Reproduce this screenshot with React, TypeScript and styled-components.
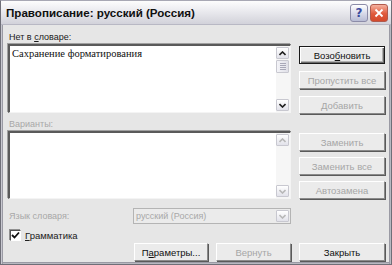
import { FC, ReactNode } from 'react';
import styled, { createGlobalStyle, css } from 'styled-components';

const GlobalStyle = createGlobalStyle`
  html, body {
    margin: 0;
    padding: 0;
    background: #ffffff;
  }
  body {
    font-family: 'Liberation Sans', 'DejaVu Sans', sans-serif;
  }
`;

const Window = styled.div`
  width: 392px;
  height: 265px;
  box-sizing: border-box;
  display: flex;
  flex-direction: column;
  background: #e6e6e6;
  border: 1px solid #6f6f78;
  border-top-color: #a8a8b4;
  box-shadow: inset 1px 0 0 #c8c8d0, inset 2px 0 0 #9a9aa4, inset -1px 0 0 #b8b8c0,
    inset -2px 0 0 #9a9aa4, inset 0 -1px 0 #b8b8c0, inset 0 -2px 0 #9a9aa4;
  overflow: hidden;
`;

const TitleBar = styled.div`
  height: 23px;
  flex: none;
  display: flex;
  align-items: center;
  padding: 0 3px 0 5px;
  background: linear-gradient(#fdfdfd 0%, #ececf0 40%, #d2d2da 100%);
  border-bottom: 1px solid #b8b8c4;
`;

const Title = styled.div`
  flex: 1;
  font-family: 'Liberation Sans', 'DejaVu Sans', sans-serif;
  font-weight: bold;
  font-size: 11.6px;
  color: #101010;
`;

const CaptionButton = styled.div<{ $close?: boolean }>`
  width: 18px;
  height: 18px;
  margin-left: 2px;
  border-radius: 3px;
  display: flex;
  align-items: center;
  justify-content: center;
  box-sizing: border-box;
  border: 1px solid ${(p) => (p.$close ? '#b05a4c' : '#8c8ca8')};
  background: ${(p) =>
    p.$close
      ? 'linear-gradient(#f5b19f, #e05a3c 55%, #d44a2c)'
      : 'linear-gradient(#ffffff, #d6d8e8 55%, #b8bcd4)'};
`;

const HelpMark = styled.span`
  color: #3a4a9c;
  font-weight: bold;
  font-size: 12px;
  font-family: 'DejaVu Sans', sans-serif;
`;

const Body = styled.div`
  flex: 1;
  display: flex;
  flex-direction: column;
  padding: 6px 8px 0 7px;
  font-size: 9px;
  color: #202020;
`;

const Label = styled.div<{ $disabled?: boolean; $mt?: number }>`
  height: 13px;
  line-height: 13px;
  margin-top: ${(p) => p.$mt ?? 0}px;
  padding-left: 1px;
  color: ${(p) => (p.$disabled ? '#a8a8a8' : '#1a1a1a')};
`;

const Section = styled.div`
  display: flex;
  gap: 8px;
`;

const ListBox = styled.div<{ $h: number }>`
  width: 283px;
  height: ${(p) => p.$h}px;
  box-sizing: border-box;
  flex: none;
  display: flex;
  background: #ffffff;
  border-style: solid;
  border-width: 2px 1px 1px 2px;
  border-color: #5a5a5a #f4f4f4 #f4f4f4 #5a5a5a;
  box-shadow: -1px -1px 0 #a0a0a0;
`;

const ListText = styled.div`
  flex: 1;
  padding: 2px 2px;
  font-family: 'Liberation Serif', 'DejaVu Serif', serif;
  font-size: 10.5px;
  color: #101010;
`;

const ScrollBar = styled.div`
  width: 13px;
  flex: none;
  display: flex;
  flex-direction: column;
  background: #f6f6f6;
  padding: 1px 1px 1px 0;
`;

const ScrollBtn = styled.div<{ $disabled?: boolean }>`
  height: 12px;
  box-sizing: border-box;
  display: flex;
  align-items: center;
  justify-content: center;
  border: 1px solid #c8c8d0;
  border-radius: 1px;
  background: linear-gradient(#ffffff, #e2e2ea);
  color: ${(p) => (p.$disabled ? '#b8b8b8' : '#202020')};
`;

const Thumb = styled.div`
  height: 13px;
  margin-top: 1px;
  box-sizing: border-box;
  border: 1px solid #c8c8d0;
  border-radius: 1px;
  background: linear-gradient(90deg, #f4f4f8, #e0e0e8);
  display: flex;
  flex-direction: column;
  align-items: center;
  justify-content: center;
  gap: 1px;
`;

const Grip = styled.div`
  width: 6px;
  height: 1px;
  background: #a8a8b8;
`;

const Spacer = styled.div`
  flex: 1;
`;

const ButtonColumn = styled.div`
  width: 86px;
  display: flex;
  flex-direction: column;
`;

const Button = styled.div<{ $disabled?: boolean; $default?: boolean; $w?: number; $mt?: number }>`
  width: ${(p) => p.$w ?? 86}px;
  height: 18px;
  margin-top: ${(p) => p.$mt ?? 0}px;
  flex: none;
  box-sizing: border-box;
  display: flex;
  align-items: center;
  justify-content: center;
  background: #ebebeb;
  border: 1px solid;
  border-color: #ffffff #8a8a8a #8a8a8a #ffffff;
  box-shadow: 1px 1px 0 #5a5a5a;
  font-size: 9.5px;
  color: ${(p) => (p.$disabled ? '#a6a6a6' : '#101010')};
  ${(p) =>
    p.$default &&
    css`
      border-color: #1a1a1a;
      box-shadow: inset 1px 1px 0 #ffffff, inset -1px -1px 0 #6a6a6a, inset -2px -2px 0 #b0b0b0;
    `}
`;

const LangRow = styled.div`
  display: flex;
  align-items: center;
  margin-top: 9px;
  height: 16px;
`;

const LangLabel = styled(Label)`
  width: 124px;
`;

const Combo = styled.div`
  width: 158px;
  height: 16px;
  box-sizing: border-box;
  display: flex;
  align-items: center;
  border: 1px solid #b4b4b4;
  background: #ebebeb;
  padding: 1px;
`;

const ComboText = styled.div`
  flex: 1;
  padding-left: 1px;
  color: #a8a8a8;
`;

const ComboBtn = styled(ScrollBtn)`
  width: 13px;
  height: 12px;
`;

const CheckRow = styled.div`
  display: flex;
  align-items: center;
  gap: 4px;
  margin-top: 5px;
  height: 12px;
  padding-left: 2px;
  font-size: 9.5px;
`;

const CheckBox = styled.div`
  width: 11px;
  height: 11px;
  box-sizing: border-box;
  border-style: solid;
  border-width: 1px;
  border-color: #505050 #ffffff #ffffff #505050;
  background: #ffffff;
  box-shadow: -1px -1px 0 #909090;
  display: flex;
  align-items: center;
  justify-content: center;
`;

const BottomRow = styled.div`
  display: flex;
  margin-top: 2px;
  padding-left: 126px;
  gap: 8px;
`;

const Arrow: FC<{ down?: boolean }> = ({ down }) => (
  <svg width="7" height="5" viewBox="0 0 7 5">
    <path
      d={down ? 'M0.5 1 L3.5 4 L6.5 1' : 'M0.5 4 L3.5 1 L6.5 4'}
      fill="none"
      stroke="currentColor"
      strokeWidth="1.6"
    />
  </svg>
);

const ScrollTrack: FC<{ thumb?: boolean; disabled?: boolean }> = ({ thumb, disabled }) => (
  <ScrollBar>
    <ScrollBtn $disabled={disabled}>
      <Arrow />
    </ScrollBtn>
    {thumb && (
      <Thumb>
        <Grip />
        <Grip />
        <Grip />
        <Grip />
      </Thumb>
    )}
    <Spacer />
    <ScrollBtn $disabled={disabled}>
      <Arrow down />
    </ScrollBtn>
  </ScrollBar>
);

const Btn: FC<{ children: ReactNode; disabled?: boolean; isDefault?: boolean; w?: number; mt?: number }> = ({
  children,
  disabled,
  isDefault,
  w,
  mt,
}) => (
  <Button $disabled={disabled} $default={isDefault} $w={w} $mt={mt}>
    {children}
  </Button>
);

const App: FC = () => (
  <>
    <GlobalStyle />
    <Window>
      <TitleBar>
        <Title>Правописание: русский (Россия)</Title>
        <CaptionButton>
          <HelpMark>?</HelpMark>
        </CaptionButton>
        <CaptionButton $close>
          <svg width="10" height="10" viewBox="0 0 10 10">
            <path d="M1.5 1.5 L8.5 8.5 M8.5 1.5 L1.5 8.5" stroke="#ffffff" strokeWidth="1.8" />
          </svg>
        </CaptionButton>
      </TitleBar>
      <Body>
        <Label>
          Нет в <u>с</u>ловаре:
        </Label>
        <Section>
          <ListBox $h={69}>
            <ListText>Сахранение форматирования</ListText>
            <ScrollTrack thumb />
          </ListBox>
          <ButtonColumn>
            <Btn isDefault mt={2}>
              Возо<u>б</u>новить
            </Btn>
            <Btn disabled mt={7}>
              Пропустить все
            </Btn>
            <Btn disabled mt={7}>
              Добавить
            </Btn>
          </ButtonColumn>
        </Section>
        <Label $disabled $mt={4}>
          Варианты:
        </Label>
        <Section>
          <ListBox $h={68}>
            <ListText />
            <ScrollTrack disabled />
          </ListBox>
          <ButtonColumn>
            <Btn disabled mt={2}>
              Заменить
            </Btn>
            <Btn disabled mt={6}>
              Заменить все
            </Btn>
            <Btn disabled mt={6}>
              Автозамена
            </Btn>
          </ButtonColumn>
        </Section>
        <LangRow>
          <LangLabel $disabled>Язык словаря:</LangLabel>
          <Combo>
            <ComboText>русский (Россия)</ComboText>
            <ComboBtn $disabled>
              <Arrow down />
            </ComboBtn>
          </Combo>
        </LangRow>
        <CheckRow>
          <CheckBox>
            <svg width="9" height="9" viewBox="0 0 9 9">
              <path d="M1 4 L3.5 6.5 L8 1.5" fill="none" stroke="#101010" strokeWidth="1.8" />
            </svg>
          </CheckBox>
          <span>
            <u>Г</u>рамматика
          </span>
        </CheckRow>
        <BottomRow>
          <Btn w={74}>
            П<u>а</u>раметры...
          </Btn>
          <Btn w={75} disabled>
            Вернуть
          </Btn>
          <Btn>Закрыть</Btn>
        </BottomRow>
      </Body>
    </Window>
  </>
);

export default App;
